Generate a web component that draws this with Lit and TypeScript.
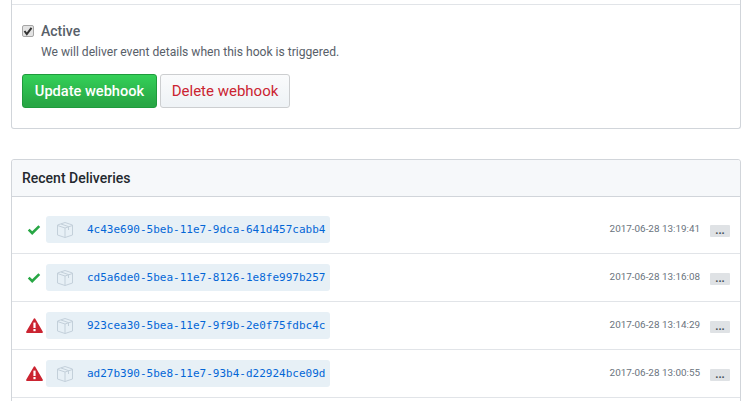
import { LitElement, html, css, svg } from "lit";
import { customElement } from "lit/decorators.js";

const rows = [
  { ok: true, id: "4c43e690-5beb-11e7-9dca-641d457cabb4", t: "2017-06-28 13:19:41" },
  { ok: true, id: "cd5a6de0-5bea-11e7-8126-1e8fe997b257", t: "2017-06-28 13:16:08" },
  { ok: false, id: "923cea30-5bea-11e7-9f9b-2e0f75fdbc4c", t: "2017-06-28 13:14:29" },
  { ok: false, id: "ad27b390-5be8-11e7-93b4-d22924bce09d", t: "2017-06-28 13:00:55" },
];

const check = svg`<svg width="14" height="14" viewBox="0 0 14 14"><path d="M0.8 7.6 L2.6 5.7 L5.2 8.3 L11.4 2.2 L13.2 4 L5.2 12 Z" fill="#28a745"/></svg>`;
const alert = svg`<svg width="17" height="15" viewBox="0 0 17 15"><path d="M8.5 0.3 C8.9 0.3 9.2 0.5 9.4 0.9 L16.7 13.4 C17.1 14.1 16.7 15 15.9 15 L1.1 15 C0.3 15 -0.1 14.1 0.3 13.4 L7.6 0.9 C7.8 0.5 8.1 0.3 8.5 0.3 Z" fill="#cb2431"/><rect x="7.4" y="4.6" width="2.2" height="5.4" fill="#fff"/><rect x="7.4" y="11" width="2.2" height="2.2" fill="#fff"/></svg>`;
const pkg = svg`<svg width="16" height="16" viewBox="0 0 16 16" fill="none" stroke="#c3d0da" stroke-width="1"><path d="M0.5 4 L0.5 13 L8 15.5 L15.5 13 L15.5 3 L8 0.5 L0.5 3 Z"/><path d="M0.5 3.5 L8 6 L15.5 3.5 M8 6 L8 15.5 M4 2 L11.5 4.6 L11.5 8"/></svg>`;

@customElement("app-root")
export class AppRoot extends LitElement {
  static styles = css`
    :host {
      display: block;
      height: 401px;
      overflow: hidden;
      padding: 0 11px;
      background: #fff;
      font-family: Roboto, "Noto Sans", sans-serif;
      color: #24292e;
      box-sizing: border-box;
    }
    .box {
      border: 1px solid #d1d5da;
      border-radius: 3px;
      background: #fff;
    }
    .form {
      border-top: none;
      border-radius: 0 0 3px 3px;
      height: 129px;
      box-sizing: border-box;
      margin-bottom: 30px;
    }
    .strip {
      height: 4px;
      border-bottom: 1px solid #e1e4e8;
    }
    .form-body {
      padding: 18px 10px 0;
    }
    .check {
      display: flex;
      align-items: flex-start;
      gap: 7px;
    }
    .cb {
      width: 12px;
      height: 12px;
      margin-top: 2px;
      border-radius: 2px;
      border: 1px solid #a6a6a6;
      background: #e3e3e3;
      box-sizing: border-box;
      display: flex;
      flex: none;
    }
    .label {
      font-size: 14px;
      line-height: 17px;
      font-weight: 500;
      color: #586069;
    }
    .note {
      font-size: 12.1px;
      line-height: 16px;
      color: #586069;
      margin-top: 4px;
    }
    .actions {
      display: flex;
      gap: 3px;
      margin-top: 14px;
    }
    .btn {
      height: 34px;
      box-sizing: border-box;
      border-radius: 3px;
      font: 500 14.6px/32px Roboto, sans-serif;
      text-align: center;
    }
    .primary {
      width: 135px;
      color: #fff;
      background: linear-gradient(#34d058, #28a745 90%);
      border: 1px solid #1f9a3c;
    }
    .danger {
      width: 130px;
      color: #cb2431;
      font-weight: 400;
      font-size: 15px;
      background: linear-gradient(#fafbfc, #eff3f6 90%);
      border: 1px solid #ccced0;
    }
    .head {
      height: 37px;
      box-sizing: border-box;
      background: #f6f8fa;
      border-bottom: 1px solid #d1d5da;
      padding: 0 10px;
      font-size: 14px;
      font-weight: 500;
      line-height: 37px;
      border-radius: 3px 3px 0 0;
    }
    .row {
      height: 48px;
      box-sizing: border-box;
      border-bottom: 1px solid #e1e4e8;
      display: flex;
      align-items: center;
      padding: 0 10px 0 0;
    }
    .row.first {
      height: 57px;
      padding-top: 9px;
    }
    .status {
      width: 34px;
      flex: none;
      display: flex;
      justify-content: center;
      padding-left: 10px;
      box-sizing: border-box;
    }
    .pill {
      height: 27px;
      width: 284px;
      box-sizing: border-box;
      border-radius: 3px;
      background: #e7f0f6;
      display: flex;
      align-items: center;
      padding-left: 11px;
      gap: 14px;
    }
    .pill svg {
      flex: none;
    }
    .id {
      font: 11px/27px "DejaVu Sans Mono", monospace;
      color: #0366d6;
    }
    .time {
      margin-left: auto;
      margin-bottom: 2px;
      font-size: 9.9px;
      color: #6a737d;
      line-height: 14px;
    }
    .more {
      margin-left: 10px;
      width: 20px;
      height: 12px;
      border-radius: 1px;
      background: #dfe2e5;
      color: #444d56;
      font: 700 11px/12px Roboto, sans-serif;
      text-align: center;
      margin-top: 2px;
    }
  `;

  render() {
    return html`
      <div class="box form">
        <div class="strip"></div>
        <div class="form-body">
          <div class="check">
            <span class="cb">
              <svg width="10" height="10" viewBox="0 0 10 10"><path d="M1.5 5 L3.8 8 L8.5 1.8" fill="none" stroke="#333" stroke-width="2"/></svg>
            </span>
            <div>
              <div class="label">Active</div>
              <div class="note">We will deliver event details when this hook is triggered.</div>
            </div>
          </div>
          <div class="actions">
            <div class="btn primary">Update webhook</div>
            <div class="btn danger">Delete webhook</div>
          </div>
        </div>
      </div>
      <div class="box">
        <div class="head">Recent Deliveries</div>
        ${rows.map(
          (r, i) => html`
            <div class="row ${i === 0 ? "first" : ""}">
              <span class="status">${r.ok ? check : alert}</span>
              <div class="pill">${pkg}<span class="id">${r.id}</span></div>
              <span class="time">${r.t}</span>
              <span class="more">...</span>
            </div>
          `
        )}
        <div class="row"></div>
      </div>
    `;
  }
}
